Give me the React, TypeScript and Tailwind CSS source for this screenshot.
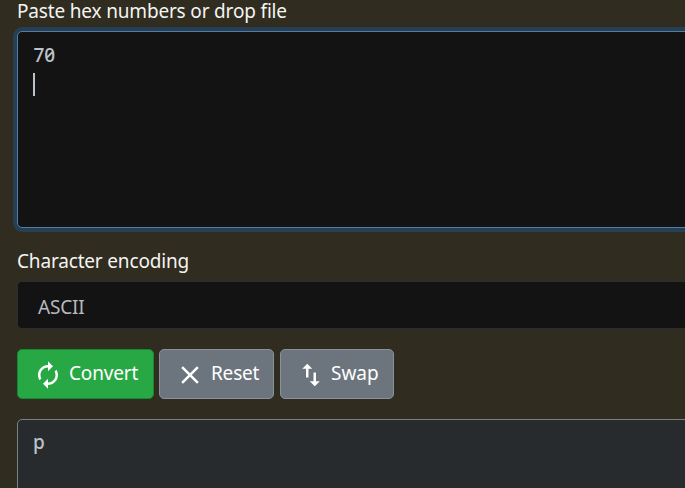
import type { ReactNode } from "react";

const paths = {
  convert:
    "M12 6v3l4-4-4-4v3c-4.42 0-8 3.58-8 8 0 1.57.46 3.03 1.24 4.26L6.7 14.8c-.45-.83-.7-1.79-.7-2.8 0-3.31 2.69-6 6-6zm6.76 1.74L17.3 9.2c.44.84.7 1.79.7 2.8 0 3.31-2.69 6-6 6v-3l-4 4 4 4v-3c4.42 0 8-3.58 8-8 0-1.57-.46-3.03-1.24-4.26z",
  reset:
    "M19 6.41L17.59 5 12 10.59 6.41 5 5 6.41 10.59 12 5 17.59 6.41 19 12 13.41 17.59 19 19 17.59 13.41 12z",
  swap: "M16 17.01V10h-2v7.01h-3L15 21l4-3.99h-3zM9 3L5 6.99h3V14h2V6.99h3L9 3z",
};

function Label({ children, className }: { children: ReactNode; className: string }) {
  return <div className={`ml-[17px] shrink-0 whitespace-nowrap text-[#f4f4f2] ${className}`}>{children}</div>;
}

function Button({ icon, label, className, textClass }: { icon: keyof typeof paths; label: string; className: string; textClass: string }) {
  return (
    <button className={`flex h-[50px] items-center rounded-[5px] border pl-[15px] pt-[2px] text-white ${className}`}>
      <svg viewBox="0 0 24 24" className="size-[30px] shrink-0 fill-current">
        <path d={paths[icon]} />
      </svg>
      <span className={`mb-[5px] whitespace-nowrap leading-[30px] ${textClass}`}>{label}</span>
    </button>
  );
}

export default function App() {
  return (
    <main className="flex h-[488px] w-[685px] flex-col overflow-hidden bg-[#302c1f] font-['Noto_Sans',sans-serif] text-[19px]">
      <Label className="h-[26px] leading-[22px] tracking-[-0.17px]">Paste hex numbers or drop file</Label>
      <div className="-mr-[10px] ml-[17px] mt-[5px] h-[197px] shrink-0 rounded-[5px] border border-[#527da5] bg-[#131313] pl-[15px] pt-[8px] leading-[30px] text-[#bdc2c9] shadow-[0_0_0_4px_#263f54]">
        <div className="pl-[0.5px] font-medium tracking-[-0.1px] [font-feature-settings:'zero']">70</div>
        <div className="mt-[3px] h-[23px] w-[2px] bg-[#bdc2c9]" />
      </div>
      <Label className="mt-[18px] h-[30px] leading-[30px] tracking-[-0.17px]">Character encoding</Label>
      <div className="-mr-[10px] ml-[17px] mt-[5px] flex h-[48px] shrink-0 items-center rounded-[5px] border border-[#2c2d30] bg-[#131313] pl-[20px] pt-[5px] tracking-[-0.2px] text-[#b5bac0]">
        ASCII
      </div>
      <div className="ml-[17px] mt-[20px] flex shrink-0">
        <Button icon="convert" label="Convert" className="w-[137px] border-[#148a31] bg-[#28a745]" textClass="ml-[6px] tracking-[-0.15px]" />
        <Button icon="reset" label="Reset" className="ml-[5px] w-[115px] border-[#899199] bg-[#6c757d]" textClass="ml-[6px] tracking-[-0.2px]" />
        <Button icon="swap" label="Swap" className="ml-[6px] w-[114px] border-[#899199] bg-[#6c757d]" textClass="ml-[5px]" />
      </div>
      <div className="-mr-[10px] ml-[17px] mt-[20px] h-[100px] shrink-0 rounded-[5px] border border-[#7c8082] bg-[#272b2e] pl-[15px] pt-[7px] font-medium leading-[30px] text-[#bdc2c9]">
        p
      </div>
    </main>
  );
}
